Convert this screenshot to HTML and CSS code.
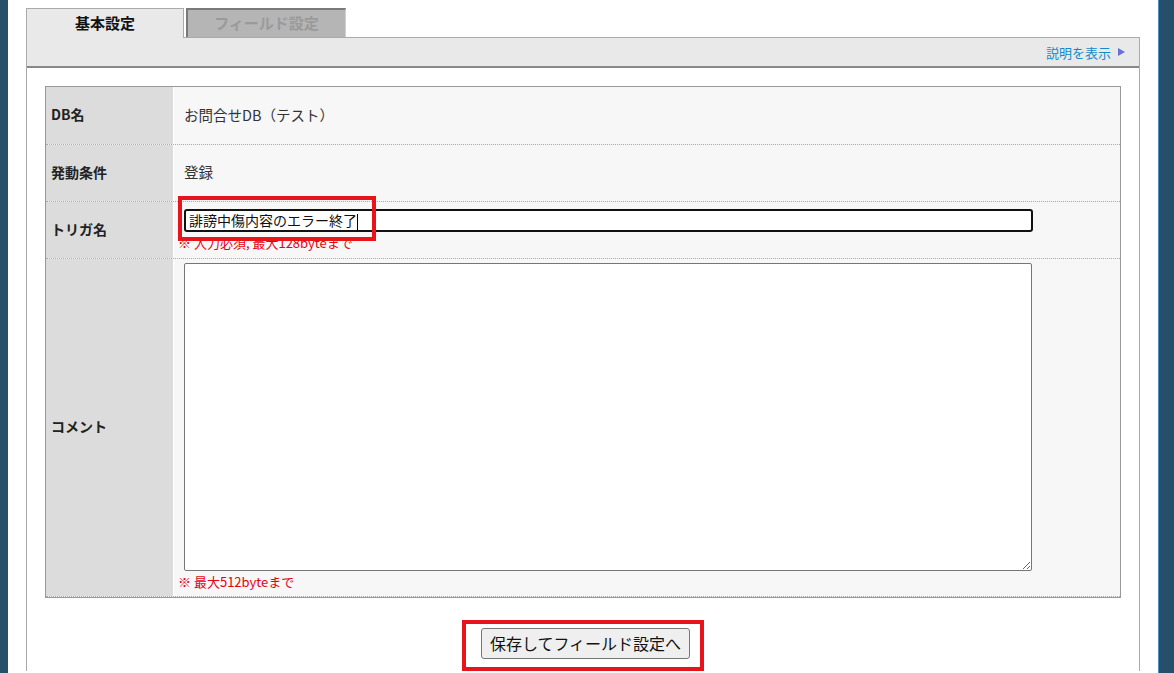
FILE: index.html
```html
<!DOCTYPE html>
<html lang="ja">
<head>
    <meta charset="UTF-8">
    <title>トリガ設定</title>
    <link rel="stylesheet" href="styles.css">
</head>
<body>
    <div class="page">
        <div class="tabs">
            <div class="tab tab-active">基本設定</div>
            <div class="tab tab-disabled">フィールド設定</div>
        </div>

        <div class="panel">
            <div class="help-bar">
                <a class="help-link" href="#">説明を表示</a>
                <span class="help-arrow"></span>
            </div>

            <div class="panel-body">
                <div class="form-table">
                    <div class="form-row row-db">
                        <div class="form-label">DB名</div>
                        <div class="form-value">お問合せDB（テスト）</div>
                    </div>
                    <div class="form-row">
                        <div class="form-label">発動条件</div>
                        <div class="form-value">登録</div>
                    </div>
                    <div class="form-row">
                        <div class="form-label">トリガ名</div>
                        <div class="form-value value-input">
                            <div class="text-input">誹謗中傷内容のエラー終了<span class="caret"></span></div>
                            <div class="hint">※ 入力必須, 最大128byteまで</div>
                            <!-- 注目枠 -->
                            <div class="mark-box"></div>
                        </div>
                    </div>
                    <div class="form-row row-comment">
                        <div class="form-label">コメント</div>
                        <div class="form-value value-textarea">
                            <textarea class="comment-area"></textarea>
                            <div class="hint">※ 最大512byteまで</div>
                        </div>
                    </div>
                </div>

                <div class="actions">
                    <div class="action-mark">
                        <button class="submit-btn">保存してフィールド設定へ</button>
                    </div>
                </div>
            </div>
        </div>
    </div>
</body>
</html>
```

FILE: styles.css
```css
body {
    margin: 0;
    background: #26506a;
    font-family: "Noto Sans CJK JP", sans-serif;
    color: #222;
}

.page {
    box-sizing: border-box;
    width: 1151px;
    min-height: 673px;
    margin-left: 8px;
    padding: 8px 18px 0;
    background: #fff;
    border-right: 1px solid #4a8fbf;
}

/* タブ */
.tabs {
    display: flex;
    align-items: flex-start;
    gap: 2px;
    position: relative;
    z-index: 1;
    margin-bottom: -1px;
}

.tab {
    box-sizing: border-box;
    display: flex;
    align-items: center;
    justify-content: center;
    padding-bottom: 3px;
    font-size: 15px;
    font-weight: bold;
}

.tab-active {
    width: 158px;
    height: 30px;
    background: #e9e9e9;
    border: 1px solid #aaa;
    border-bottom: none;
    color: #111;
}

.tab-disabled {
    width: 160px;
    height: 29px;
    background: #b5b5b5;
    border-top: 2px solid #7a7a7a;
    border-left: 2px solid #7a7a7a;
    border-right: 1px solid #d0d0d0;
    color: #9a9a9a;
}

/* パネル */
.panel {
    border-left: 1px solid #aaa;
    border-right: 1px solid #aaa;
}

.help-bar {
    display: flex;
    align-items: center;
    justify-content: flex-end;
    gap: 7px;
    height: 28px;
    padding-right: 14px;
    background: #e9e9e9;
    border-top: 1px solid #aaa;
    border-bottom: 2px solid #888;
}

.help-link {
    font-size: 13px;
    color: #1689cc;
    text-decoration: none;
}

.help-arrow {
    width: 0;
    height: 0;
    border-left: 7px solid #6670d8;
    border-top: 4px solid transparent;
    border-bottom: 4px solid transparent;
}

.panel-body {
    padding: 18px 18px 0;
}

/* フォームテーブル */
.form-table {
    border: 1px solid #999;
    background: #f7f7f7;
}

.form-row {
    display: flex;
    min-height: 56px;
    border-bottom: 1px dotted #aaa;
}

.row-db {
    min-height: 57px;
}

.row-comment {
    min-height: 337px;
}

.form-label {
    display: flex;
    align-items: center;
    width: 128px;
    padding: 0 0 3px 5px;
    box-sizing: border-box;
    background: #dcdcdc;
    border-right: 1px solid #fff;
    font-size: 14px;
    font-weight: bold;
    color: #222;
}

.form-value {
    flex: 1;
    display: flex;
    flex-direction: column;
    justify-content: center;
    padding: 0 0 3px 10px;
    font-size: 14.5px;
    color: #333;
}

.value-input {
    justify-content: flex-start;
    padding-top: 7px;
    position: relative;
}

.value-textarea {
    justify-content: flex-start;
    padding-top: 4px;
}

.text-input {
    box-sizing: border-box;
    width: 849px;
    height: 23px;
    padding: 0 3px;
    background: #fff;
    border: 2px solid #111;
    border-radius: 3px;
    font-size: 14px;
    line-height: 18px;
    color: #111;
    white-space: nowrap;
}

.caret {
    display: inline-block;
    width: 1px;
    height: 17px;
    background: #000;
    vertical-align: middle;
}

.comment-area {
    display: block;
    box-sizing: border-box;
    width: 848px;
    height: 308px;
    margin: 0;
    border: 1px solid #767676;
    border-radius: 2px;
    background: #fff;
    resize: both;
}

.hint {
    margin: 2px 0 0 -6px;
    font-size: 13px;
    line-height: 18px;
    color: #e60012;
}

.mark-box {
    position: absolute;
    left: 4px;
    top: -6px;
    box-sizing: border-box;
    width: 198px;
    height: 45px;
    border: 4px solid #e8141c;
}

/* ボタン */
.actions {
    padding-top: 22px;
    text-align: center;
}

.action-mark {
    display: inline-block;
    padding: 4px 10px 8px 15px;
    border: 4px solid #e8141c;
}

.submit-btn {
    display: block;
    padding: 3px 8px;
    background: #efefef;
    border: 1px solid #767676;
    border-radius: 3px;
    font-family: "Noto Sans CJK JP", sans-serif;
    font-size: 16px;
    line-height: 23px;
    color: #111;
}
```
